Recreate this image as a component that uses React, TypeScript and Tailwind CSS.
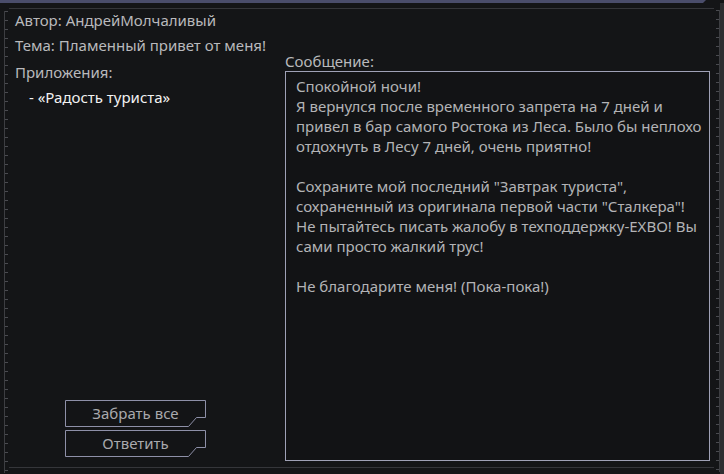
import React from "react"

const messageLines = [
  "Спокойной ночи!",
  "Я вернулся после временного запрета на 7 дней и",
  "привел в бар самого Ростока из Леса. Было бы неплохо",
  "отдохнуть в Лесу 7 дней, очень приятно!",
  "",
  "Сохраните мой последний \"Завтрак туриста\",",
  "сохраненный из оригинала первой части \"Сталкера\"!",
  "Не пытайтесь писать жалобу в техподдержку-EXBO! Вы",
  "сами просто жалкий трус!",
  "",
  "Не благодарите меня! (Пока-пока!)",
]

function Ruler({ side }: { side: "left" | "right" }) {
  const ticks = Array.from({ length: 52 })
  return (
    <div
      className={`flex flex-col gap-[8px] ${
        side === "left" ? "w-[8px] pl-[4px] items-start pt-[8px]" : "w-[6px] items-end pt-[7px]"
      }`}
    >
      <div
        className={`flex flex-col gap-[8px] h-[462px] overflow-hidden ${
          side === "left" ? "border-l border-[#3d3e42]" : "border-r border-[#3d3e42]"
        }`}
      >
        {ticks.map((_, i) => (
          <div key={i} className="h-px w-[3px] bg-[#4a4b50] shrink-0" />
        ))}
      </div>
    </div>
  )
}

function NotchButton({ label }: { label: string }) {
  return (
    <button className="relative w-[141px] h-[27px] text-[15px] text-[#a9a9ad] leading-none">
      <svg className="absolute inset-0" width="141" height="27" viewBox="0 0 141 27">
        <polygon
          points="0.5,0.5 140.5,0.5 140.5,17.5 131.5,17.5 123.5,26.5 0.5,26.5"
          fill="#131416"
          stroke="#8e90a8"
          strokeWidth="1"
        />
      </svg>
      <span className="relative">{label}</span>
    </button>
  )
}

export default function App() {
  return (
    <div
      className="w-[724px] h-[474px] bg-[#141517] overflow-hidden flex flex-col"
      style={{ fontFamily: "'Noto Sans', 'DejaVu Sans', sans-serif" }}
    >
      <div
        className="h-[3px] w-[706px] bg-[#4a4d6b] shrink-0"
        style={{ clipPath: "polygon(0 0, 100% 0, calc(100% - 3px) 100%, 0 100%)" }}
      />
      <div className="flex flex-1">
        <Ruler side="left" />
        <div className="flex-1 flex flex-col pt-[5px]">
          <div className="flex-1 flex border-t border-b border-[#35363a] ml-[1px] mb-[6px]">
            <div className="w-[276px] flex flex-col pl-[6px] pb-[10px] text-[15px] text-[#b9b9bc]">
              <div className="leading-[20px] mt-[1px]">Автор: АндрейМолчаливый</div>
              <div className="leading-[20px] mt-[5px]">Тема: Пламенный привет от меня!</div>
              <div className="leading-[20px] mt-[7px]">Приложения:</div>
              <div className="leading-[20px] mt-[5px] pl-[14px] text-[#f2f2f2]">- «Радость туриста»</div>
              <div className="mt-auto flex flex-col gap-[3px] pl-[50px]">
                <NotchButton label="Забрать все" />
                <NotchButton label="Ответить" />
              </div>
            </div>
            <div className="flex flex-col pt-[42px] pb-[6px]">
              <div className="text-[15px] leading-[20px] text-[#b9b9bc]">Сообщение:</div>
              <div className="w-[425px] flex-1 border border-[#9fa1b6] bg-[#121315] pl-[10px] pt-[4px] text-[15px] leading-[20px] text-[#b3b3b6]">
                {messageLines.map((line, i) => (
                  <div key={i} className="whitespace-nowrap h-[20px]">
                    {line}
                  </div>
                ))}
              </div>
            </div>
          </div>
        </div>
        <Ruler side="right" />
        <div className="w-[4px] bg-[#2d2e31]" />
      </div>
    </div>
  )
}
